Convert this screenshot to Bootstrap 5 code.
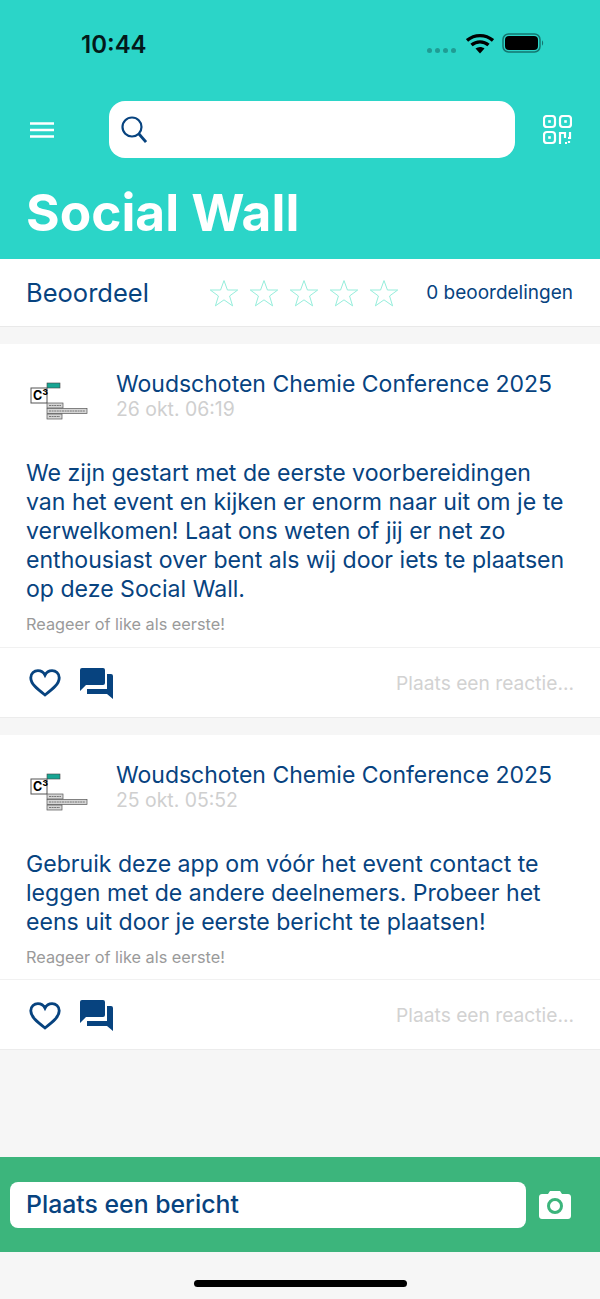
<!DOCTYPE html>
<html lang="en">
<head>
    <meta charset="UTF-8">
    <meta name="viewport" content="width=device-width, initial-scale=1.0">
    <title>Social Wall</title>
    <link href="https://cdn.jsdelivr.net/npm/bootstrap@5.3.0/dist/css/bootstrap.min.css" rel="stylesheet">
    <style>
        html, body { height: 100%; }
        body {
            background-color: #f6f6f6;
            font-family: Inter, "Liberation Sans", sans-serif;
            color: #07437f;
            height: 1299px;
            overflow: hidden;
        }
        .top-header { background: #2bd5c8; height: 259px; }
        .status-row { height: 101px; padding: 30px 56px 0 81px; }
        .status-time { font-size: 24px; font-weight: 600; color: #03191a; line-height: 30px; }
        .status-dots { gap: 3px; margin-top: 18px; margin-right: 10px; }
        .status-dots span { width: 5px; height: 5px; border-radius: 50%; background: #1f9c94; }
        .search-row { height: 57px; padding: 0 27px 0 30px; }
        .search-field { width: 406px; height: 57px; background: #fff; border-radius: 16px; margin-left: 55px; margin-right: 28px; padding-left: 12px; }
        .page-title { color: #fff; font-size: 51.4px; font-weight: 700; line-height: 60px; margin: 24px 0 0 26px; }
        .rating-row { background: #fff; height: 68px; border-bottom: 1px solid #e9e9e9; padding: 0 27px 0 26px; }
        .rating-label { font-size: 25.5px; line-height: 30px; width: 183px; }
        .rating-count { font-size: 19px; margin-left: auto; padding-top: 1px; }
        .star-group { gap: 10px; }
        .post-block { background: #fff; border-bottom: 1px solid #ececec; margin-top: 17px; }
        .post-head { padding: 26px 26px 0 26px; height: 94px; }
        .post-logo { width: 90px; flex: none; }
        .post-author { font-size: 23px; line-height: 28px; }
        .post-date { font-size: 19.400px; line-height: 23px; color: #cfcfcf; }
        .post-text { font-size: 23.1px; line-height: 29px; padding: 21px 30px 0 26px; margin: 0; }
        .post-hint { font-size: 16.3px; color: #9a9a9a; padding: 0 26px; line-height: 20px; margin: 10px 0 0; }
        .post-actions { height: 70px; margin-top: 12.5px; border-top: 1px solid #f1f1f1; padding: 2px 26px 0 29px; gap: 19px; }
        .reply-hint { margin-left: auto; font-size: 19.200px; color: #d2d2d2; }
        .compose-bar { background: #3cb57c; height: 95px; padding: 0 27px 0 10px; margin-top: auto; gap: 13px; }
        .compose-field { width: 516px; height: 46px; background: #fff; border-radius: 8px; font-size: 24.8px; font-weight: 500; padding-left: 16px; }
        .home-strip { height: 47px; }
        .home-bar { width: 213px; height: 7px; background: #000; border-radius: 4px; margin-top: 28px; }
    </style>
</head>
<body class="d-flex flex-column">

<!-- Header -->
<header class="top-header">
    <div class="status-row d-flex">
        <div class="status-time">10:44</div>
        <div class="ms-auto d-flex align-items-start">
            <div class="status-dots d-flex"><span></span><span></span><span></span><span></span></div>
            <svg width="28" height="22" viewBox="0 0 28 22" class="me-2" style="margin-top:3px"><path d="M1 7.500C8.500 1 19.500 1 27 7.500M5.500 12C10.500 7.800 17.500 7.800 22.500 12" fill="none" stroke="#000" stroke-width="3.400"/><path d="M9.500 15.500C12.300 13.500 15.700 13.500 18.500 15.500L14 20.500Z" fill="#000"/></svg>
            <svg width="42" height="21" viewBox="0 0 42 21" style="margin-top:3px"><rect x="1" y="1" width="37" height="18" rx="5.500" fill="none" stroke="#14766f" stroke-width="1.500"/><rect x="3" y="3" width="33" height="14" rx="4" fill="#000"/><path d="M40 7.500C41.500 8 41.500 12 40 12.500Z" fill="#14766f"/></svg>
        </div>
    </div>
    <div class="search-row d-flex align-items-center">
        <svg width="24" height="16" viewBox="0 0 24 16"><path d="M0 1.500H24M0 8H24M0 14.500H24" stroke="#fff" stroke-width="2.600" fill="none"/></svg>
        <div class="search-field d-flex align-items-center">
            <svg width="26" height="28" viewBox="0 0 26 28"><circle cx="11" cy="11" r="9.500" fill="none" stroke="#07437f" stroke-width="2.200"/><path d="M18 18L25 26" stroke="#07437f" stroke-width="2.800" fill="none"/></svg>
        </div>
        <svg width="29" height="30" viewBox="0 0 29 30" fill="none" stroke="#fff" stroke-width="2.200">
            <rect x="1" y="1" width="11" height="11" rx="3"/><rect x="17" y="1" width="11" height="11" rx="3"/><rect x="1" y="17" width="11" height="11" rx="3"/>
            <rect x="5.200" y="5.200" width="2.600" height="2.600" fill="#fff" stroke="none"/><rect x="21.200" y="5.200" width="2.600" height="2.600" fill="#fff" stroke="none"/><rect x="5.200" y="21.200" width="2.600" height="2.600" fill="#fff" stroke="none"/>
            <path d="M17 29V18H22V23M22 28H24M27 17V23H25"/><path d="M26 26V29" stroke-dasharray="2 1"/>
        </svg>
    </div>
    <h1 class="page-title">Social Wall</h1>
</header>

<!-- Rating -->
<section class="rating-row d-flex align-items-center">
    <div class="rating-label">Beoordeel</div>
    <div class="star-group d-flex">
        <svg width="30" height="28" viewBox="0 0 35 32"><path d="M17.500 1.500L21.500 12.500H33.500L24 19.500L27.500 31L17.500 24L7.500 31L11 19.500L1.500 12.500H13.500Z" fill="none" stroke="#8eecd9" stroke-width="1.100"/></svg>
        <svg width="30" height="28" viewBox="0 0 35 32"><path d="M17.500 1.500L21.500 12.500H33.500L24 19.500L27.500 31L17.500 24L7.500 31L11 19.500L1.500 12.500H13.500Z" fill="none" stroke="#8eecd9" stroke-width="1.100"/></svg>
        <svg width="30" height="28" viewBox="0 0 35 32"><path d="M17.500 1.500L21.500 12.500H33.500L24 19.500L27.500 31L17.500 24L7.500 31L11 19.500L1.500 12.500H13.500Z" fill="none" stroke="#8eecd9" stroke-width="1.100"/></svg>
        <svg width="30" height="28" viewBox="0 0 35 32"><path d="M17.500 1.500L21.500 12.500H33.500L24 19.500L27.500 31L17.500 24L7.500 31L11 19.500L1.500 12.500H13.500Z" fill="none" stroke="#8eecd9" stroke-width="1.100"/></svg>
        <svg width="30" height="28" viewBox="0 0 35 32"><path d="M17.500 1.500L21.500 12.500H33.500L24 19.500L27.500 31L17.500 24L7.500 31L11 19.500L1.500 12.500H13.500Z" fill="none" stroke="#8eecd9" stroke-width="1.100"/></svg>
    </div>
    <div class="rating-count">0 beoordelingen</div>
</section>

<!-- Post 1 -->
<article class="post-block">
    <div class="post-head d-flex">
        <div class="post-logo">
            <svg width="62" height="40" viewBox="0 0 62 40" style="margin:11px 0 0 3px">
                <rect x="18" y="2" width="13" height="5" fill="#17a593" stroke="#444" stroke-width=".6"/>
                <rect x="2" y="7" width="16" height="15" fill="#fff" stroke="#555" stroke-width="1"/>
                <text x="4" y="19" font-family="Inter, sans-serif" font-size="12.500" font-weight="700" fill="#000">C³</text>
                <rect x="18" y="22" width="16" height="5" fill="#d6d6d6" stroke="#555" stroke-width=".7"/>
                <path d="M20 24.500H32" stroke="#777" stroke-width="1" stroke-dasharray="2 .6"/>
                <rect x="18" y="27.500" width="40" height="5" fill="#d6d6d6" stroke="#555" stroke-width=".7"/>
                <path d="M20 30H56" stroke="#777" stroke-width="1" stroke-dasharray="2 .6"/>
                <rect x="18" y="33" width="15" height="5" fill="#d6d6d6" stroke="#555" stroke-width=".7"/>
                <path d="M20 35.500H31" stroke="#777" stroke-width="1" stroke-dasharray="2 .6"/>
            </svg>
        </div>
        <div>
            <div class="post-author">Woudschoten Chemie Conference 2025</div>
            <div class="post-date">26 okt. 06:19</div>
        </div>
    </div>
    <p class="post-text">We zijn gestart met de eerste voorbereidingen van het event en kijken er enorm naar uit om je te verwelkomen! Laat ons weten of jij er net zo enthousiast over bent als wij door iets te plaatsen op deze Social Wall.</p>
    <p class="post-hint">Reageer of like als eerste!</p>
    <div class="post-actions d-flex align-items-center">
        <svg width="32" height="30" viewBox="0 0 36 32"><path d="M18 29.500C9 22.500 2 17 2 10C2 5 6 2 10 2C13.500 2 16.500 4 18 7C19.500 4 22.500 2 26 2C30 2 34 5 34 10C34 17 27 22.500 18 29.500Z" fill="none" stroke="#07437f" stroke-width="3.200"/></svg>
        <svg width="33" height="31" viewBox="0 0 33 31"><path d="M2 0H23A2 2 0 0 1 25 2V15A2 2 0 0 1 23 17H6L0 23V2A2 2 0 0 1 2 0Z" fill="#07437f"/><path d="M27 6H31A2 2 0 0 1 33 8V31L27 26H7V21H27Z" fill="#07437f"/></svg>
        <div class="reply-hint">Plaats een reactie...</div>
    </div>
</article>

<!-- Post 2 -->
<article class="post-block">
    <div class="post-head d-flex">
        <div class="post-logo">
            <svg width="62" height="40" viewBox="0 0 62 40" style="margin:11px 0 0 3px">
                <rect x="18" y="2" width="13" height="5" fill="#17a593" stroke="#444" stroke-width=".6"/>
                <rect x="2" y="7" width="16" height="15" fill="#fff" stroke="#555" stroke-width="1"/>
                <text x="4" y="19" font-family="Inter, sans-serif" font-size="12.500" font-weight="700" fill="#000">C³</text>
                <rect x="18" y="22" width="16" height="5" fill="#d6d6d6" stroke="#555" stroke-width=".7"/>
                <path d="M20 24.500H32" stroke="#777" stroke-width="1" stroke-dasharray="2 .6"/>
                <rect x="18" y="27.500" width="40" height="5" fill="#d6d6d6" stroke="#555" stroke-width=".7"/>
                <path d="M20 30H56" stroke="#777" stroke-width="1" stroke-dasharray="2 .6"/>
                <rect x="18" y="33" width="15" height="5" fill="#d6d6d6" stroke="#555" stroke-width=".7"/>
                <path d="M20 35.500H31" stroke="#777" stroke-width="1" stroke-dasharray="2 .6"/>
            </svg>
        </div>
        <div>
            <div class="post-author">Woudschoten Chemie Conference 2025</div>
            <div class="post-date">25 okt. 05:52</div>
        </div>
    </div>
    <p class="post-text">Gebruik deze app om vóór het event contact te leggen met de andere deelnemers. Probeer het eens uit door je eerste bericht te plaatsen!</p>
    <p class="post-hint">Reageer of like als eerste!</p>
    <div class="post-actions d-flex align-items-center">
        <svg width="32" height="30" viewBox="0 0 36 32"><path d="M18 29.500C9 22.500 2 17 2 10C2 5 6 2 10 2C13.500 2 16.500 4 18 7C19.500 4 22.500 2 26 2C30 2 34 5 34 10C34 17 27 22.500 18 29.500Z" fill="none" stroke="#07437f" stroke-width="3.200"/></svg>
        <svg width="33" height="31" viewBox="0 0 33 31"><path d="M2 0H23A2 2 0 0 1 25 2V15A2 2 0 0 1 23 17H6L0 23V2A2 2 0 0 1 2 0Z" fill="#07437f"/><path d="M27 6H31A2 2 0 0 1 33 8V31L27 26H7V21H27Z" fill="#07437f"/></svg>
        <div class="reply-hint">Plaats een reactie...</div>
    </div>
</article>

<!-- Compose -->
<footer class="compose-bar d-flex align-items-center">
    <div class="compose-field d-flex align-items-center">Plaats een bericht</div>
    <svg width="32" height="28" viewBox="0 0 32 28"><path d="M3 3H9L11 0H21L23 3H29C30.500 3 32 4 32 6V25C32 27 30.500 28 29 28H3C1.500 28 0 27 0 25V6C0 4 1.500 3 3 3Z" fill="#fff"/><circle cx="16" cy="15" r="6.500" fill="none" stroke="#3cb57c" stroke-width="3"/></svg>
</footer>
<div class="home-strip d-flex justify-content-center"><div class="home-bar"></div></div>

<script src="https://cdn.jsdelivr.net/npm/bootstrap@5.3.0/dist/js/bootstrap.bundle.min.js"></script>
</body>
</html>
